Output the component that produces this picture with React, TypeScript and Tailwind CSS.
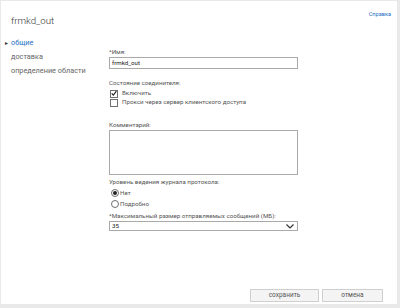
import React from 'react';

const Checkbox = ({ checked, label }: { checked?: boolean; label: string }) => (
  <div className="flex items-center h-[9px]">
    <span className="ml-px w-[8px] h-[8px] border border-[#6f6f6f] bg-white flex items-center justify-center">
      {checked && (
        <svg width="7" height="7" viewBox="0 0 7 7">
          <path d="M0.8 3.4 L2.7 5.4 L6.3 0.8" fill="none" stroke="#222" strokeWidth="1.3" />
        </svg>
      )}
    </span>
    <span className="ml-[4px] text-[6.2px] leading-[9px] text-[#555]">{label}</span>
  </div>
);

const Radio = ({ checked, label }: { checked?: boolean; label: string }) => (
  <div className="flex items-center h-[10px] mt-px">
    <span className="ml-[2px] w-[8px] h-[8px] rounded-full border border-[#6f6f6f] bg-white flex items-center justify-center">
      {checked && <span className="w-[4px] h-[4px] rounded-full bg-[#222]" />}
    </span>
    <span className="ml-px text-[6.2px] leading-[10px] text-[#555]">{label}</span>
  </div>
);

const Label = ({ children, className = '' }: { children: React.ReactNode; className?: string }) => (
  <div className={`text-[6.2px] leading-[10px] text-[#555] whitespace-nowrap ${className}`}>{children}</div>
);

export default function App() {
  return (
    <div className="w-[400px] h-[308px] bg-[#e9e9e9] pt-px pl-px pr-[3px] pb-[4px] font-['Roboto','Open_Sans',sans-serif]">
      <div className="h-full bg-white flex flex-col">
        <div className="flex justify-between items-start">
          <h1 className="ml-[10px] mt-[11px] text-[9.7px] leading-[18px] font-light text-[#333]">frmkd_out</h1>
          <a className="mr-[6px] mt-[8px] text-[5.6px] leading-[10px] text-[#1e6fc4]">Справка</a>
        </div>

        <div className="flex flex-1 mt-[6px]">
          <nav className="w-[108px] text-[7.3px] leading-[14px] text-[#666]">
            <div className="flex items-center">
              <span className="w-[10px] pl-[4px] text-[6px] text-[#333]">▸</span>
              <span className="text-[#1e6fc4]">общие</span>
            </div>
            <div className="pl-[10px]">доставка</div>
            <div className="pl-[10px]">определение области</div>
          </nav>

          <div className="w-[189px] pt-[11px]">
            <Label>*Имя:</Label>
            <div className="h-[12px] border border-[#a9a9a9] px-[2px] text-[6.2px] leading-[10px] text-[#222]">frmkd_out</div>

            <Label className="mt-[9px]">Состояние соединителя:</Label>
            <div className="mt-px">
              <Checkbox checked label="Включить" />
              <Checkbox label="Прокси через сервер клиентского доступа" />
            </div>

            <Label className="mt-[13px]">Комментарий:</Label>
            <div className="h-[45px] border border-[#a9a9a9]" />

            <Label className="mt-[2px]">Уровень ведения журнала протокола:</Label>
            <Radio checked label="Нет" />
            <Radio label="Подробно" />

            <Label className="mt-[2px]">*Максимальный размер отправляемых сообщений (МБ):</Label>
            <div className="h-[10px] border border-[#a9a9a9] flex items-center justify-between pl-[2px] pr-[3px]">
              <span className="text-[6.2px] leading-[8px] text-[#222]">35</span>
              <svg width="8" height="5" viewBox="0 0 8 5">
                <path d="M0.5 0.5 L4 4 L7.5 0.5" fill="none" stroke="#333" strokeWidth="1.2" />
              </svg>
            </div>
          </div>
        </div>

        <div className="flex justify-end gap-[3px] pr-[14px] pb-[2px]">
          <button className="w-[69px] h-[13px] bg-[#f4f4f4] border border-[#cfcfcf] text-[6.5px] leading-[11px] text-[#555]">сохранить</button>
          <button className="w-[61px] h-[13px] bg-[#f4f4f4] border border-[#cfcfcf] text-[6.5px] leading-[11px] text-[#555]">отмена</button>
        </div>
      </div>
    </div>
  );
}
